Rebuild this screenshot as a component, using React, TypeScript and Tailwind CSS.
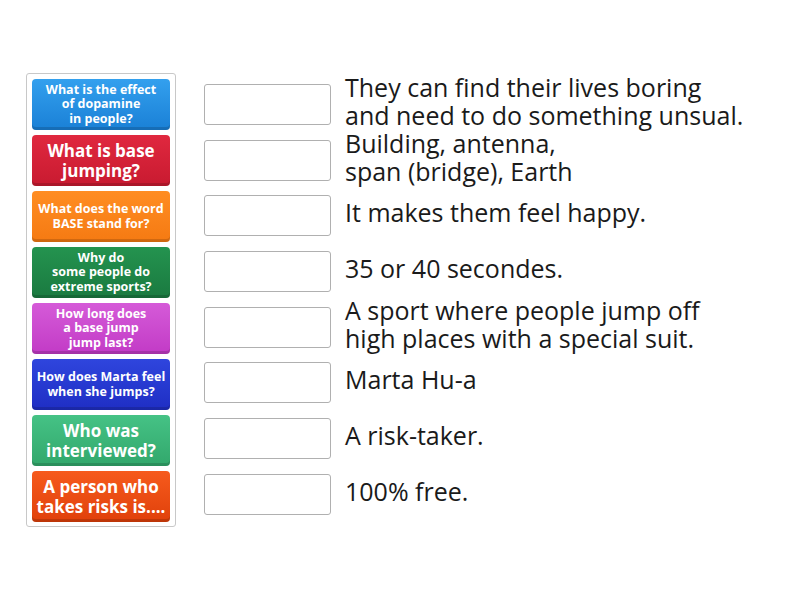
import React from 'react';

type Tile = { lines: string[]; size: 'sm' | 'lg'; bg: string };

const tiles: Tile[] = [
  { lines: ['What is the effect', 'of dopamine', 'in people?'], size: 'sm', bg: 'bg-gradient-to-b from-[#33a0ee] to-[#1a80d6]' },
  { lines: ['What is base', 'jumping?'], size: 'lg', bg: 'bg-gradient-to-b from-[#e0283f] to-[#c81a30]' },
  { lines: ['What does the word', 'BASE stand for?'], size: 'sm', bg: 'bg-gradient-to-b from-[#ff8d22] to-[#f57a12]' },
  { lines: ['Why do', 'some people do', 'extreme sports?'], size: 'sm', bg: 'bg-gradient-to-b from-[#24934f] to-[#1a7a40]' },
  { lines: ['How long does', 'a base jump', 'jump last?'], size: 'sm', bg: 'bg-gradient-to-b from-[#d55ad8] to-[#c23ac6]' },
  { lines: ['How does Marta feel', 'when she jumps?'], size: 'sm', bg: 'bg-gradient-to-b from-[#2f45dd] to-[#1f2ec4]' },
  { lines: ['Who was', 'interviewed?'], size: 'lg', bg: 'bg-gradient-to-b from-[#45c285] to-[#32a86c]' },
  { lines: ['A person who', 'takes risks is....'], size: 'lg', bg: 'bg-gradient-to-b from-[#f65a1c] to-[#e0400a]' },
];

const answers: string[][] = [
  ['They can find their lives boring', 'and need to do something unsual.'],
  ['Building, antenna,', 'span (bridge), Earth'],
  ['It makes them feel happy.'],
  ['35 or 40 secondes.'],
  ['A sport where people jump off', 'high places with a special suit.'],
  ['Marta Hu-a'],
  ['A risk-taker.'],
  ['100% free.'],
];

export default function App() {
  return (
    <div className="w-[800px] h-[600px] bg-white font-['Open_Sans',sans-serif] flex items-start pt-[73px] pl-[26px]">
      {/* prompts */}
      <div className="w-[150px] border border-[#c8c8c8] rounded-[3px] px-[5px] pt-[5px] pb-[4px] flex flex-col gap-[5px]">
        {tiles.map((t, i) => (
          <div
            key={i}
            className={`${t.bg} h-[51px] rounded-[4px] flex flex-col items-center justify-center text-white font-bold text-center shadow-[inset_0_-3px_0_rgba(0,0,0,0.15)] ${
              t.size === 'lg' ? 'text-[17px] leading-[20px]' : 'text-[12.5px] leading-[14.5px]'
            }`}
          >
            {t.lines.map((l, j) => (
              <span key={j} className="whitespace-nowrap">{l}</span>
            ))}
          </div>
        ))}
      </div>

      {/* answers */}
      <div className="ml-[28px] mt-[11px] flex flex-col gap-[14.7px]">
        {answers.map((a, i) => (
          <div key={i} className="h-[41px] flex items-center">
            <div className="w-[127px] h-[41px] border border-[#b0b0b0] rounded-[3px] bg-white shrink-0" />
            <div className="ml-[14px] pb-[7px] text-[25px] leading-[28px] text-[#1a1a1a] whitespace-nowrap">
              {a.map((l, j) => (
                <div key={j}>{l}</div>
              ))}
            </div>
          </div>
        ))}
      </div>
    </div>
  );
}
